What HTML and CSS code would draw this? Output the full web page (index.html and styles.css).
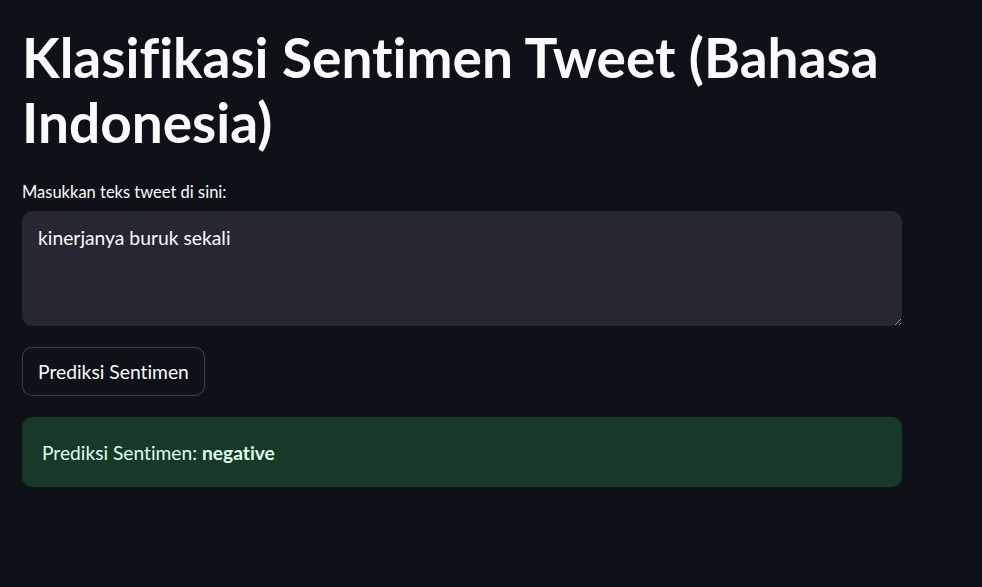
FILE: index.html
```html
<!DOCTYPE html>
<html lang="id">
<head>
<meta charset="utf-8">
<title>Klasifikasi Sentimen Tweet</title>
<link rel="stylesheet" href="styles.css">
</head>
<body>
<main class="main">
  <h1 class="title">Klasifikasi Sentimen Tweet (Bahasa Indonesia)</h1>
  <label class="label" for="tweet">Masukkan teks tweet di sini:</label>
  <textarea id="tweet" class="textarea">kinerjanya buruk sekali</textarea>
  <div class="btn-row"><button class="btn">Prediksi Sentimen</button></div>
  <div class="alert">Prediksi Sentimen: <strong>negative</strong></div>
</main>
</body>
</html>
```
FILE: styles.css
```css
html, body {
  margin: 0;
  padding: 0;
  background: #0e1117;
  color: #fafafa;
  font-family: "Lato", "Noto Sans", sans-serif;
  font-variant-ligatures: none;
}
.main {
  width: 880px;
  padding: 25px 0 0 22px;
  display: flex;
  flex-direction: column;
}
.title {
  margin: 0;
  font-size: 55px;
  font-weight: 700;
  line-height: 65px;
  color: #fafafa;
}
.label {
  margin-top: 26px;
  font-size: 16.5px;
  line-height: 22px;
  color: #fafafa;
}
.textarea {
  margin-top: 8px;
  box-sizing: border-box;
  width: 880px;
  height: 115px;
  background: #262730;
  border: none;
  border-radius: 10px;
  padding: 13px 16px;
  color: #fafafa;
  font-family: inherit;
  font-variant-ligatures: none;
  font-size: 19.3px;
  line-height: 28px;
  outline: none;
  resize: vertical;
}
.btn-row { margin-top: 21px; display: flex; }
.btn {
  box-sizing: border-box;
  height: 49px;
  padding: 0 15px;
  background: #0e1117;
  border: 1px solid rgba(250,250,250,0.2);
  border-radius: 10px;
  color: #fafafa;
  font-family: inherit;
  font-variant-ligatures: none;
  font-size: 19.3px;
}
.alert {
  margin-top: 21px;
  box-sizing: border-box;
  height: 70px;
  display: flex;
  align-items: center;
  padding: 0 20px;
  border-radius: 10px;
  background: #173928;
  color: #dffde9;
  font-size: 19.2px;
}
.alert strong { font-weight: 700; margin-left: 5px; }
```
